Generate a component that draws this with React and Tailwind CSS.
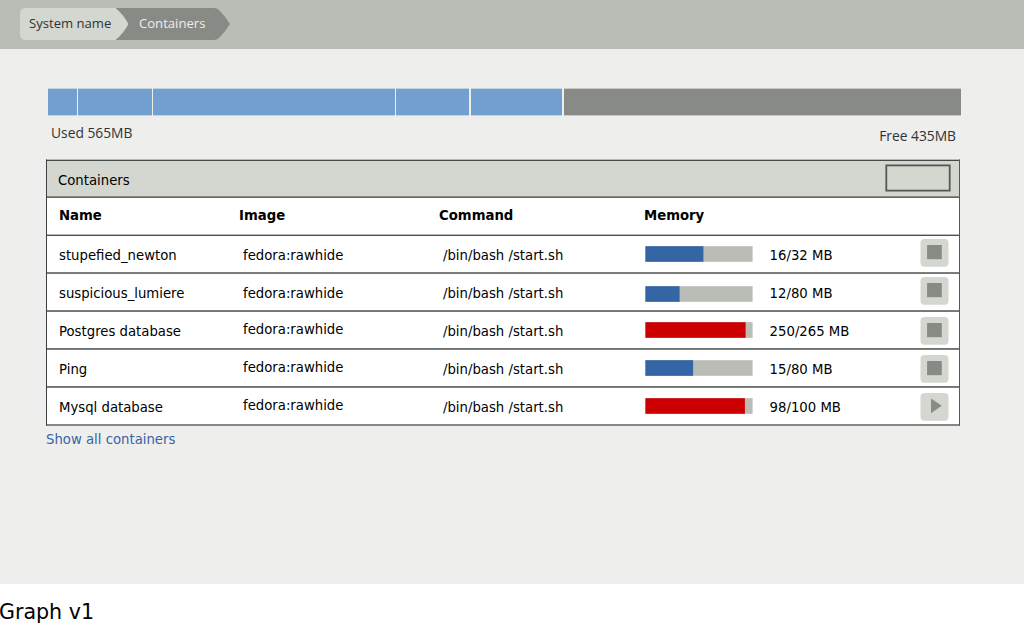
const usage = [
  'ml-[48px] w-[29px] bg-[#729fcf]',
  'ml-px w-[74px] bg-[#729fcf]',
  'ml-px w-[242px] bg-[#729fcf]',
  'ml-px w-[73px] bg-[#729fcf]',
  'ml-[2px] w-[91px] bg-[#729fcf]',
  'ml-[2px] w-[397px] bg-[#888a85]',
];

const BLUE = '#3465a4';
const RED = '#cc0000';

const rows = [
  { name: 'stupefied_newton', imageTop: 'mt-[12px]', barTop: 'mt-[10px]', used: 58, color: BLUE, memory: '16/32 MB', btnTop: 'mt-[3px]', edge: 'border-t-[#4d5052] border-b-[#7b7f7d]' },
  { name: 'suspicious_lumiere', imageTop: 'mt-[12px]', barTop: 'mt-[12px]', used: 34.2, color: BLUE, memory: '12/80 MB', btnTop: 'mt-[3px]', edge: 'border-t-[#747876] border-b-[#7b7f7d]' },
  { name: 'Postgres database', imageTop: 'mt-[10px]', barTop: 'mt-[10px]', used: 100.2, color: RED, memory: '250/265 MB', btnTop: 'mt-[5px]', edge: 'border-t-[#747876] border-b-[#6f7371]' },
  { name: 'Ping', imageTop: 'mt-[10px]', barTop: 'mt-[10px]', used: 47.7, color: BLUE, memory: '15/80 MB', btnTop: 'mt-[5px]', edge: 'border-t-[#7b7f7d] border-b-[#6f7371]' },
  { name: 'Mysql database', imageTop: 'mt-[10px]', barTop: 'mt-[10px]', used: 99.5, color: RED, memory: '98/100 MB', btnTop: 'mt-[5px]', edge: 'border-t-[#7b7f7d] border-b-[#858886]', play: true },
];

function Row({ row }) {
  return (
    <div className={`flex h-[38px] items-start border-y bg-white pl-[12px] leading-[16px] ${row.edge}`}>
      <div className="mt-[12px] w-[184px]">{row.name}</div>
      <div className={`w-[200px] ${row.imageTop}`}>fedora:rawhide</div>
      <div className="mt-[12px] w-[202px]">/bin/bash /start.sh</div>
      <svg className={`block shrink-0 ${row.barTop}`} width="108" height="16" viewBox="0 0 108 16">
        <rect x="0.4" y="0.2" width="107.2" height="15.6" fill="#babdb6" />
        <rect x="0.4" y="0.2" width={row.used} height="15.6" fill={row.color} />
      </svg>
      <div className="mt-[12px] ml-[16.6px] w-[150.4px]">{row.memory}</div>
      <button className={`shrink-0 ${row.btnTop}`}>
        <svg className="block" width="29" height="28" viewBox="0 0 29 28">
          <rect x="0.5" y="0" width="28" height="27.7" rx="4" fill="#d3d7cf" />
          {row.play
            ? <path d="M11 5.6 L21.7 12.8 L11 20.2 Z" fill="#888a85" />
            : <path d="M7.1 6 H21.8 V20.2 H7.1 Z" fill="#888a85" />}
        </svg>
      </button>
    </div>
  );
}

export default function App() {
  return (
    <div className="h-[623px] w-[1024px] overflow-hidden bg-white font-['DejaVu_Sans',sans-serif] text-[13.25px] text-black">
      <div className="h-[584px] bg-[#eeeeec]">
        <header className="h-[49px] bg-[#babdb6] pt-[8px] pl-[20px] font-['Open_Sans',sans-serif] text-[13.1px]">
          <nav className="relative flex h-[32px] w-[210px] items-center">
            <svg className="absolute inset-0" width="210" height="32" viewBox="0 0 210 32">
              <path d="M90 0 H194 Q197 0 199 2 Q205 8 210 16 Q205 24 199 30 Q197 32 194 32 H90 Z" fill="#888a85" />
              <path d="M6 0 H95.5 Q103 6 108.5 16 Q103 26 95.5 32 H6 Q0 32 0 26 V6 Q0 0 6 0 Z" fill="#d3d7cf" />
            </svg>
            <span className="relative w-[110px] pl-[9px] text-[#2e3436]">System name</span>
            <span className="relative pl-[9px] text-[#eeeeec]">Containers</span>
          </nav>
        </header>

        <div className="mt-[39px] flex h-[28px]">
          {usage.map((segment, i) => (
            <div key={i} className={`border-y border-[#c3d2e2] last:border-[#c9cac7] ${segment}`} />
          ))}
        </div>
        <div className="flex h-[43px] justify-between pr-[68px] pl-[51px] font-['Open_Sans',sans-serif] text-[13.8px] leading-[18px] text-[#2e3436]">
          <span className="mt-[8px]">Used 565MB</span>
          <span className="mt-[11px]">Free 435MB</span>
        </div>

        <section className="ml-[46px] h-[267px] w-[914px] border-t border-r border-b border-l border-t-[#b9bbba] border-r-[#555759] border-b-[#858886] border-l-[#3c4042]">
          <div className="flex h-[37px] justify-between border-t border-b border-t-[#44494a] border-b-[#888a85] bg-[#d3d7cf] pr-[8px] pl-[11px]">
            <h1 className="mt-[12px] leading-[16px]">Containers</h1>
            <svg className="mt-[3px] block" width="66" height="28" viewBox="0 0 66 28">
              <rect x="1.3" y="1.4" width="63.4" height="25.2" fill="none" stroke="#555753" strokeWidth="1.8" />
            </svg>
          </div>
          <div className="flex h-[38px] border-t border-b border-t-[#666666] border-b-[#bbbbbb] bg-white pl-[12px] font-bold leading-[16px]">
            <div className="mt-[10px] w-[180px]">Name</div>
            <div className="mt-[10px] w-[200px]">Image</div>
            <div className="mt-[10px] w-[205px]">Command</div>
            <div className="mt-[10px]">Memory</div>
          </div>
          {rows.map((row) => <Row key={row.name} row={row} />)}
        </section>
        <a className="ml-[46px] mt-[6px] block w-fit leading-[16px] text-[#3465a4]">Show all containers</a>
      </div>
      <p className="mt-[16px] -ml-px text-[20.6px] leading-[24px]">Graph v1</p>
    </div>
  );
}
